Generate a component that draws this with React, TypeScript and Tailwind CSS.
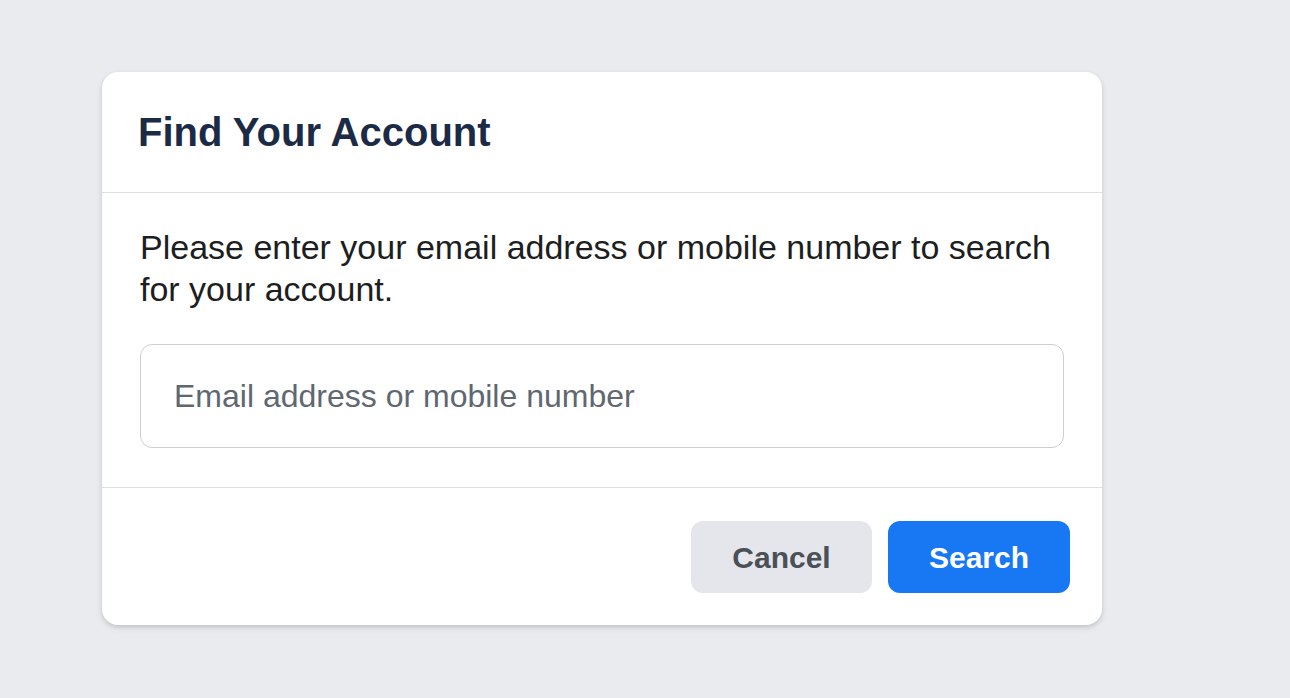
export default function App() {
  return (
    <div
      className="min-h-[698px] w-full bg-[#e9ebee] pl-[102px] pt-[72px]"
      style={{ fontFamily: '"Liberation Sans", Arial, Helvetica, sans-serif' }}
    >
      <div className="w-[1000px] rounded-[16px] bg-white shadow-[0_2px_4px_rgba(0,0,0,0.12),0_3px_8px_rgba(0,0,0,0.06)]">
        <div className="flex h-[121px] items-center border-b border-[#dddfe2] pl-[36px]">
          <h2 className="text-[40px] font-bold leading-none text-[#1c2b45]">Find Your Account</h2>
        </div>
        <div className="border-b border-[#dddfe2] px-[38px] pb-[39px] pt-[33px]">
          <p className="text-[34px] leading-[42px] text-[#1c1e21]">
            Please enter your email address or mobile number to search for your account.
          </p>
          <input
            type="text"
            placeholder="Email address or mobile number"
            className="mt-[34px] block h-[104px] w-[924px] rounded-[12px] border border-[#ccd0d5] bg-white pl-[33px] pr-[32px] text-[32px] text-[#1c1e21] outline-none placeholder:text-[#606770]"
          />
        </div>
        <div className="flex justify-end gap-[16px] pb-[32px] pr-[32px] pt-[33px]">
          <button className="h-[72px] w-[181px] rounded-[12px] bg-[#e4e6eb] text-[30px] font-bold text-[#4b4f56]">
            Cancel
          </button>
          <button className="h-[72px] w-[182px] rounded-[12px] bg-[#1877f2] text-[30px] font-bold text-white">
            Search
          </button>
        </div>
      </div>
    </div>
  );
}
